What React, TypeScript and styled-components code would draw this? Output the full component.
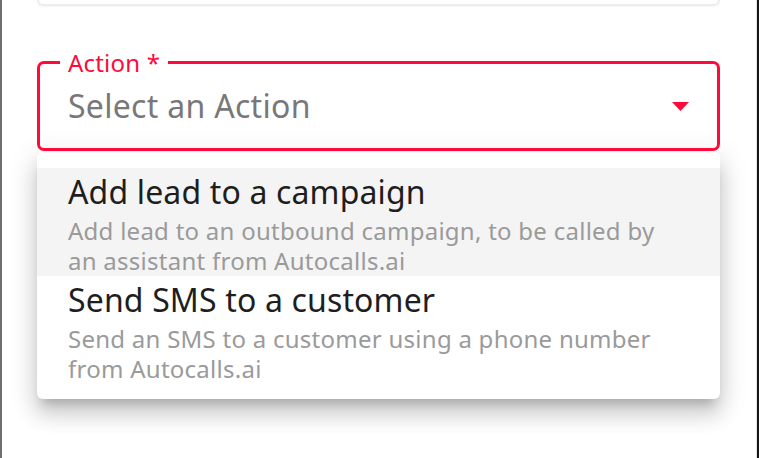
import React from "react";
import styled, { createGlobalStyle } from "styled-components";

const Global = createGlobalStyle`
  html, body { margin: 0; padding: 0; background: #ffffff; }
  body { font-family: "Noto Sans", "Open Sans", sans-serif; }
  * { box-sizing: border-box; }
`;

const RED = "#ff0a3a";

const Frame = styled.div`
  width: 759px;
  height: 458px;
  overflow: hidden;
  background: #ffffff;
  border-left: 2px solid #6f6f6f;
  border-right: 2px solid #151515;
  box-shadow: inset -1px 0 0 #e4e4e4;
`;

const Column = styled.div`
  width: 683px;
  margin-left: 35px;
  display: flex;
  flex-direction: column;
`;

const CardTail = styled.div`
  height: 6px;
  border: 2px solid #ececec;
  border-top: none;
  border-radius: 0 0 10px 10px;
  box-shadow: 0 1px 2px rgba(0, 0, 0, 0.04);
`;

const Field = styled.div`
  position: relative;
  margin-top: 55px;
  height: 90px;
  border: 3px solid ${RED};
  border-radius: 7px;
  display: flex;
  align-items: center;
  padding: 0 28px 0 28px;
`;

const FloatingLabel = styled.span`
  position: absolute;
  top: -15px;
  left: 20px;
  padding: 0 8px;
  background: #ffffff;
  color: ${RED};
  font-size: 24px;
  line-height: 28px;
  letter-spacing: 0.2px;
`;

const Placeholder = styled.span`
  flex: 1;
  color: #787878;
  font-size: 32px;
  line-height: 38px;
  letter-spacing: 0.3px;
`;

const Caret = styled.svg`
  width: 17px;
  height: 9px;
  flex: none;
`;

const Menu = styled.ul`
  list-style: none;
  margin: 1px 0 0 0;
  padding: 16px 0 15px 0;
  background: #ffffff;
  border-radius: 6px;
  box-shadow: 0 10px 10px -6px rgba(0, 0, 0, 0.2),
    0 16px 20px 2px rgba(0, 0, 0, 0.12), 0 6px 28px 4px rgba(0, 0, 0, 0.1);
`;

const Item = styled.li<{ $active?: boolean }>`
  height: 108px;
  padding: 6px 40px 0 31px;
  background: ${(p) => (p.$active ? "#f4f4f4" : "transparent")};
`;

const Title = styled.div`
  color: #1e1e1e;
  font-size: 32px;
  line-height: 36px;
  letter-spacing: 0.15px;
`;

const Description = styled.div`
  margin-top: 6px;
  color: #9a9a9a;
  font-size: 24px;
  line-height: 30px;
  letter-spacing: 0.26px;
`;

const options = [
  {
    title: "Add lead to a campaign",
    description:
      "Add lead to an outbound campaign, to be called by an assistant from Autocalls.ai",
  },
  {
    title: "Send SMS to a customer",
    description:
      "Send an SMS to a customer using a phone number from Autocalls.ai",
  },
];

export default function App() {
  return (
    <>
      <Global />
      <Frame>
        <Column>
          <CardTail />
          <Field>
            <FloatingLabel>Action *</FloatingLabel>
            <Placeholder>Select an Action</Placeholder>
            <Caret viewBox="0 0 17 9">
              <polygon points="0,0 17,0 8.5,9" fill={RED} />
            </Caret>
          </Field>
          <Menu>
            {options.map((o, i) => (
              <Item key={o.title} $active={i === 0}>
                <Title>{o.title}</Title>
                <Description>{o.description}</Description>
              </Item>
            ))}
          </Menu>
        </Column>
      </Frame>
    </>
  );
}
